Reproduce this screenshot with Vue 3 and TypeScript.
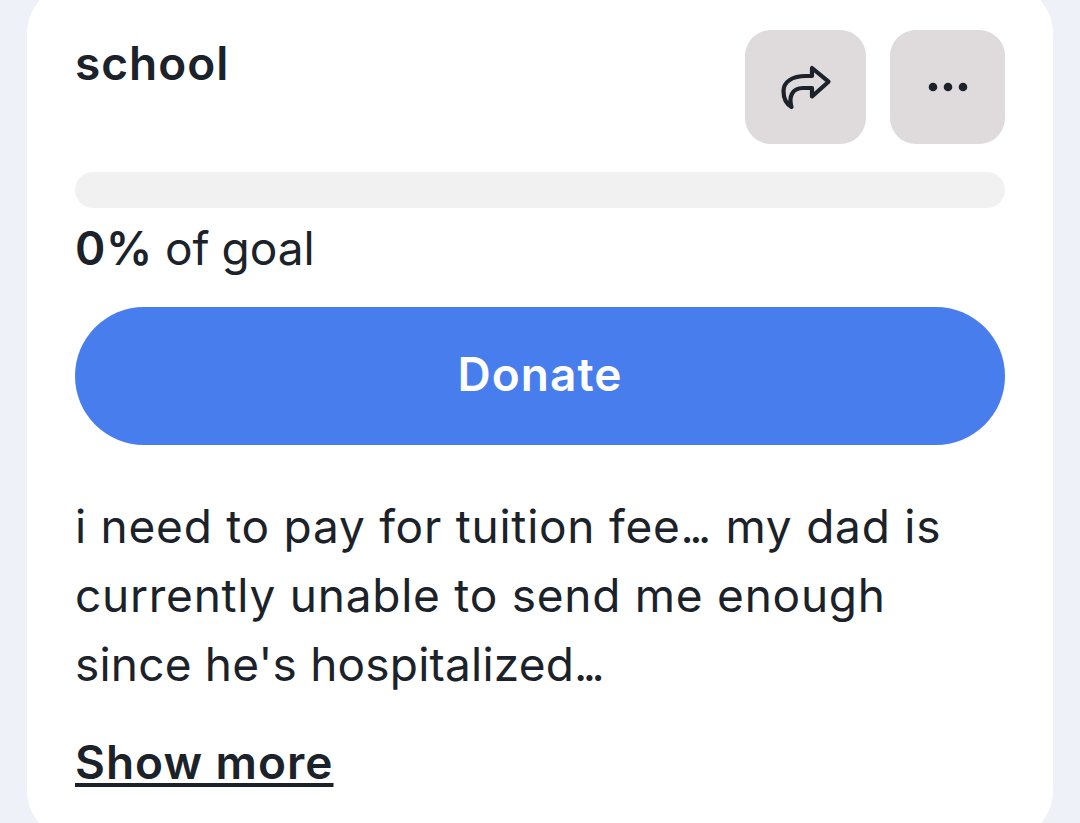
<script setup lang="ts">
const description = [
  { text: 'i need to pay for tuition fee', dots: '...', rest: ' my dad is' },
  { text: 'currently unable to send me enough', dots: '', rest: '' },
  { text: "since he's hospitalized", dots: '...', rest: '' },
]
</script>

<template>
  <div class="page">
    <div class="card">
      <div class="header">
        <div class="title">school</div>
        <div class="actions">
          <button class="icon-btn share">
            <svg width="60" height="55" viewBox="0 0 60 55" fill="none" stroke="#1b2229" stroke-width="4.2" stroke-linejoin="round" stroke-linecap="round">
              <path d="M52.5 21.7 36 8V16H30C16 16 7.5 22 7.5 31C7.5 38 10.5 44 15.5 47C12.5 37 16 28 27 28H36V36.5Z" />
            </svg>
          </button>
          <button class="icon-btn more">
            <svg width="44" height="12" viewBox="0 0 44 12" fill="#1b2229">
              <circle cx="7" cy="6" r="4.3" />
              <circle cx="22" cy="6" r="4.3" />
              <circle cx="37" cy="6" r="4.3" />
            </svg>
          </button>
        </div>
      </div>
      <div class="progress"></div>
      <div class="goal"><b>0%</b> of goal</div>
      <button class="donate">Donate</button>
      <div class="description">
        <div v-for="line in description" :key="line.text" class="line">{{ line.text }}<span class="dots">{{ line.dots }}</span>{{ line.rest }}</div>
      </div>
      <a class="show-more">Show more</a>
    </div>
  </div>
</template>

<style scoped>
.page {
  height: 823px;
  overflow: hidden;
  background-color: #eef1f7;
  padding: 0 27px;
  box-sizing: border-box;
  color: #1b2229;
  font-family: Inter, "Liberation Sans", sans-serif;
  font-size: 46px;
  letter-spacing: 0.75px;
}

.card {
  margin-top: -18px;
  height: 860px;
  box-sizing: border-box;
  padding: 48px 48px 0;
  background-color: #fff;
  border-radius: 52px;
}

.header {
  display: flex;
  justify-content: space-between;
}

.title {
  font-weight: 600;
  line-height: 66px;
  letter-spacing: 1px;
}

.actions {
  display: flex;
  gap: 24px;
}

.icon-btn {
  display: flex;
  align-items: center;
  justify-content: center;
  height: 114px;
  padding: 0;
  border: none;
  border-radius: 26px;
  background-color: #dfdadb;
}

.share {
  width: 121px;
}

.more {
  width: 115px;
}

.progress {
  height: 36px;
  margin-top: 28px;
  border-radius: 18px;
  background-color: #f1f1f1;
}

.goal {
  margin-top: 6px;
  line-height: 68px;
  letter-spacing: 0;
  word-spacing: -1px;
}

.goal b {
  font-weight: 600;
  letter-spacing: 0.75px;
}

.donate {
  display: block;
  width: 100%;
  height: 138px;
  margin-top: 25px;
  padding: 0 0 4px;
  border: none;
  border-radius: 69px;
  background-color: #477dec;
  color: #fff;
  font-family: inherit;
  font-size: 46px;
  font-weight: 600;
  letter-spacing: 1px;
}

.description {
  margin-top: 47px;
  line-height: 69px;
}

.line:last-child {
  letter-spacing: 0.2px;
}

.dots {
  letter-spacing: -4.5px;
  margin-right: 5px;
}

.show-more {
  display: inline-block;
  margin-top: 31px;
  font-weight: 600;
  line-height: 64px;
  letter-spacing: 1px;
  text-decoration: underline;
  text-decoration-thickness: 4px;
  text-underline-offset: 4px;
}
</style>
